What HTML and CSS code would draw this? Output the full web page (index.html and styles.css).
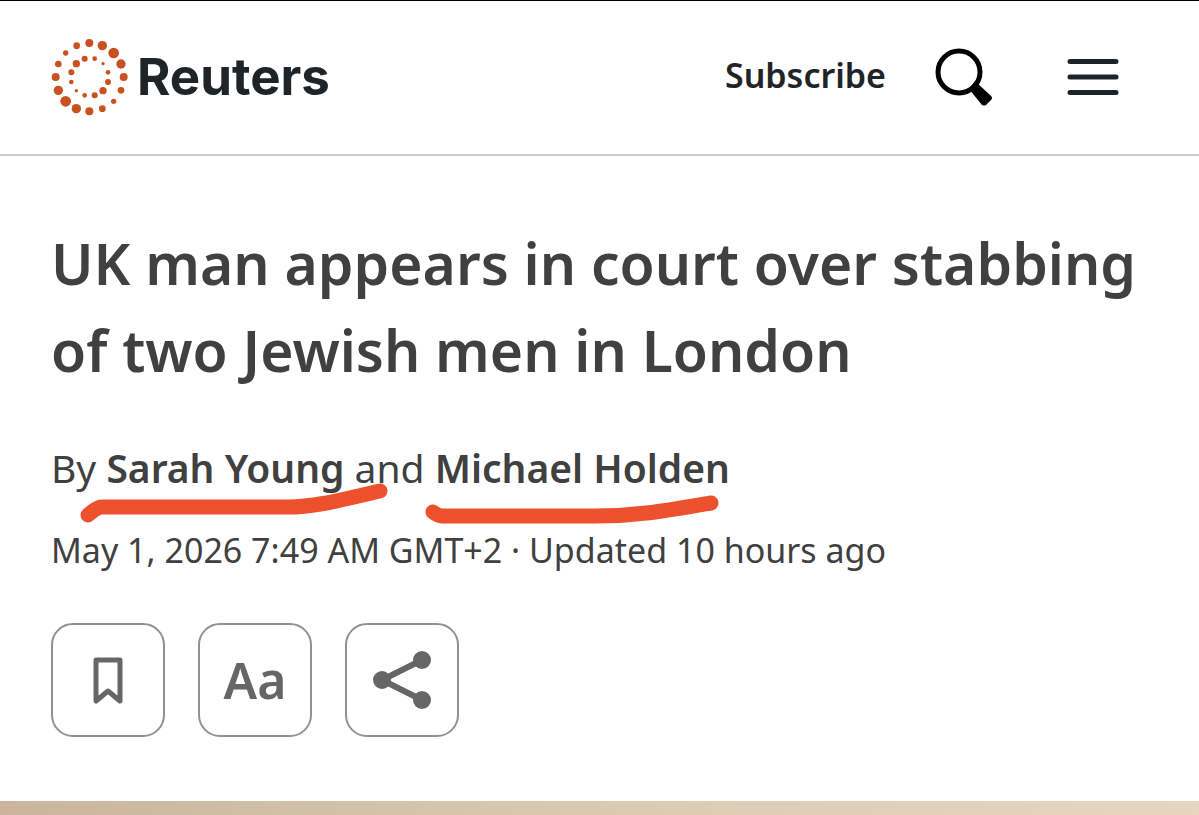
FILE: index.html
```
<!DOCTYPE html>
<html lang="en">
  <head>
    <meta charset="utf-8">
    <meta name="viewport" content="width=device-width, initial-scale=1">
    <title>UK man appears in court over stabbing of two Jewish men in London</title>
    <link rel="stylesheet" href="styles.css">
  </head>
  <body>
    <header class="header">
      <a class="logo" href="#">
        <svg class="logo-dots" viewBox="30 38 237 234" aria-hidden="true">
          <!-- outer ring -->
          <circle cx="148" cy="53" r="12" />
          <circle cx="187" cy="61" r="14" />
          <circle cx="221" cy="83" r="16" />
          <circle cx="243" cy="116" r="14" />
          <circle cx="251" cy="155" r="12" />
          <circle cx="243" cy="195" r="10" />
          <circle cx="221" cy="228" r="8" />
          <circle cx="187" cy="250" r="10" />
          <circle cx="148" cy="258" r="12" />
          <circle cx="109" cy="250" r="14" />
          <circle cx="77" cy="228" r="16" />
          <circle cx="55" cy="195" r="14" />
          <circle cx="47" cy="155" r="12" />
          <circle cx="55" cy="116" r="10" />
          <circle cx="77" cy="83" r="8" />
          <circle cx="110" cy="61" r="10" />
          <!-- inner ring -->
          <circle cx="134" cy="100" r="9" />
          <circle cx="164" cy="100" r="7" />
          <circle cx="189" cy="115" r="5" />
          <circle cx="204" cy="141" r="7" />
          <circle cx="204" cy="170" r="9" />
          <circle cx="189" cy="196" r="11" />
          <circle cx="164" cy="210" r="9" />
          <circle cx="134" cy="210" r="7" />
          <circle cx="109" cy="196" r="5" />
          <circle cx="94" cy="170" r="7" />
          <circle cx="94" cy="141" r="9" />
          <circle cx="109" cy="115" r="11" />
        </svg>
        <span class="logo-text">Reuters</span>
      </a>
      <nav class="nav">
        <a class="subscribe" href="#">Subscribe</a>
        <button class="icon-button" type="button" aria-label="Search">
          <svg width="60" height="60" viewBox="0 0 60 60">
            <circle cx="25" cy="25" r="21" fill="none" stroke="#000" stroke-width="5" />
            <path d="M35 42l6-8 16 15q2 2 0 4l-5 5q-2 1-4 0z" />
          </svg>
        </button>
        <button class="icon-button menu-button" type="button" aria-label="Menu">
          <svg width="52" height="38" viewBox="0 0 52 38">
            <path d="M3 3.500h46M3 19h46M3 34.500h46" stroke="#212427" stroke-width="5" stroke-linecap="round" />
          </svg>
        </button>
      </nav>
    </header>

    <main class="article">
      <h1 class="headline">UK man appears in court over stabbing of two Jewish men in London</h1>
      <p class="byline">
        By
        <span class="marked"><a class="author" href="#">Sarah Young</a><svg class="marker marker-first" width="310" height="44" viewBox="0 0 310 44" aria-hidden="true"><path d="M10 33Q19 25 24 25H210C240 25 270 16 302 9" /></svg></span>
        and
        <span class="marked"><a class="author" href="#">Michael Holden</a><svg class="marker marker-second" width="300" height="40" viewBox="0 0 300 40" aria-hidden="true"><path d="M9 21Q14 25 18 25H170C215 25 247 19 287 12" /></svg></span>
      </p>
      <p class="date">May 1, 2026 7:49 AM GMT+2 · Updated 10 hours ago</p>
      <div class="tools">
        <button class="tool" type="button" aria-label="Save">
          <svg width="30" height="48" viewBox="0 0 30 48">
            <path d="M3 4h24v41L15 35 3 45z" fill="none" stroke="#666" stroke-width="5" stroke-linejoin="round" />
          </svg>
        </button>
        <button class="tool" type="button" aria-label="Text size">Aa</button>
        <button class="tool" type="button" aria-label="Share">
          <svg width="58" height="58" viewBox="0 0 58 58">
            <path d="M49 9L9 29l40 20" fill="none" stroke="#666" stroke-width="6" />
            <g fill="#666">
              <circle cx="49" cy="9" r="9" />
              <circle cx="9" cy="29" r="9" />
              <circle cx="49" cy="49" r="9" />
            </g>
          </svg>
        </button>
      </div>
    </main>
    <div class="photo"></div>
  </body>
</html>
```
FILE: styles.css
```
* {
  box-sizing: border-box;
}

body {
  display: flex;
  flex-direction: column;
  min-height: 100vh;
  margin: 0;
  border-top: 1px solid #000;
  background-color: #fff;
  color: #404040;
  font-family: "Noto Sans", sans-serif;
}

a {
  color: inherit;
  text-decoration: none;
}

button {
  padding: 0;
  border: none;
  background: none;
  cursor: pointer;
}

svg {
  display: block;
}

.header {
  display: flex;
  justify-content: space-between;
  align-items: center;
  padding: 37px 80px 38px 50px;
  border-bottom: 2px solid #ccc;
}

.logo {
  display: flex;
  align-items: center;
  gap: 8px;
  color: #212427;
}

.logo-dots {
  width: 79px;
  height: 78px;
  fill: #c9501f;
}

.logo-text {
  font-family: Inter, sans-serif;
  font-size: 51px;
  font-weight: 700;
  line-height: 60px;
}

.nav {
  display: flex;
  align-items: center;
}

.subscribe {
  margin-right: 48px;
  padding-bottom: 4px;
  color: #212427;
  font-size: 34px;
  font-weight: 600;
}

.menu-button {
  margin-left: 73px;
}

.article {
  padding: 64px 51px;
}

.headline {
  margin: 0;
  font-size: 57px;
  font-weight: 600;
  line-height: 87px;
}

.byline {
  margin: 46px 0 0;
  font-size: 39px;
  font-weight: 400;
  line-height: 56px;
}

.author {
  font-weight: 600;
}

.marked {
  position: relative;
}

/* hand-drawn underlines over the author names */
.marker {
  position: absolute;
  overflow: visible;
  fill: none;
  stroke: #ec502c;
  stroke-width: 15;
  stroke-linecap: round;
}

.marker-first {
  top: 41px;
  left: -28px;
}

.marker-second {
  top: 50px;
  left: -11px;
}

.date {
  margin: 28px 0 0;
  font-size: 34px;
  line-height: 52px;
}

.tools {
  display: flex;
  gap: 33px;
  margin-top: 47px;
}

.tool {
  display: flex;
  justify-content: center;
  align-items: center;
  width: 114px;
  height: 114px;
  border: 2px solid #919191;
  border-radius: 22px;
  color: #666;
  font-family: inherit;
  font-size: 50px;
  font-weight: 600;
}

.photo {
  flex: 1;
  min-height: 13px;
  background: linear-gradient(to right, #cbb49b, #d3c4ad 35%, #dccdb7 60%, #e4d6c1);
}
```
